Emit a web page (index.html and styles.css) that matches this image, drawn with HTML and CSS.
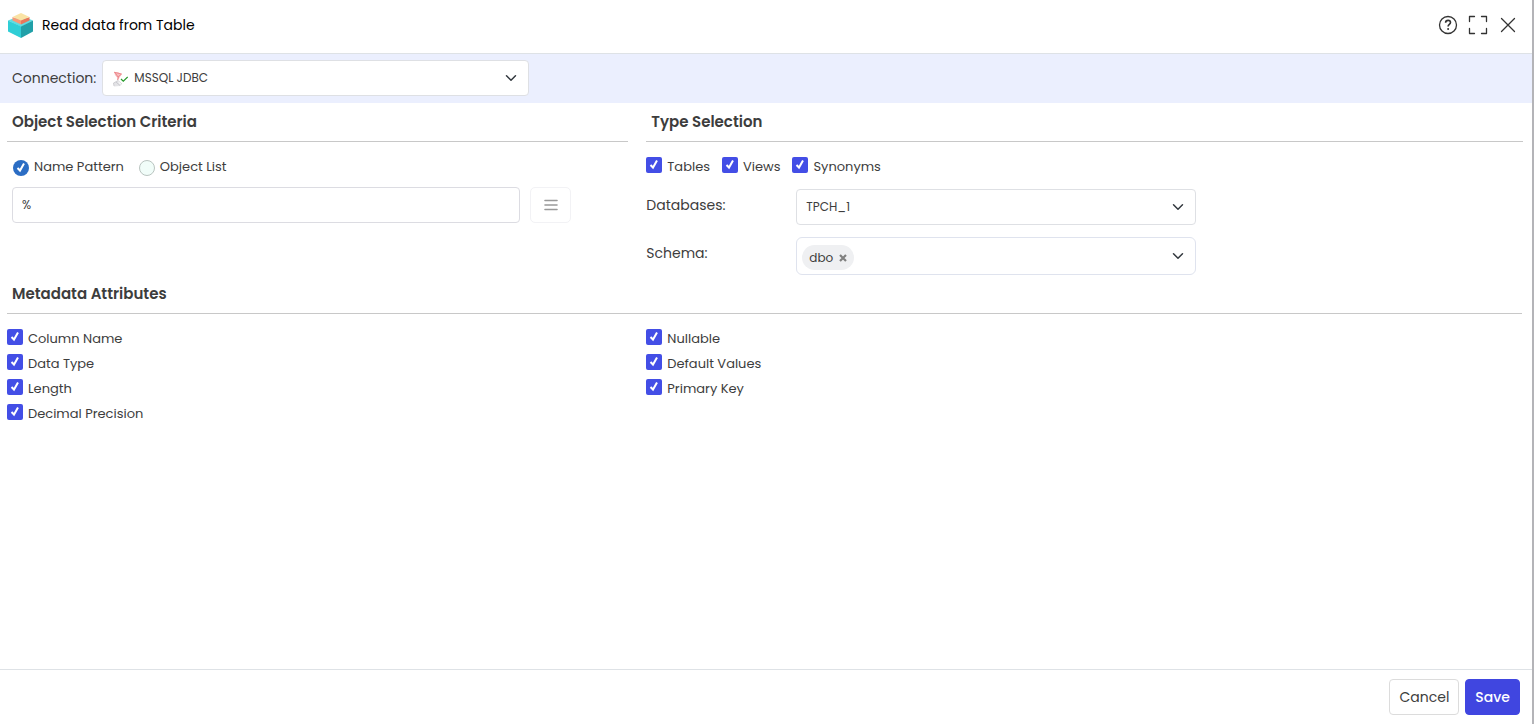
FILE: index.html
```html
<!DOCTYPE html>
<html lang="en">
<head>
    <meta charset="UTF-8">
    <meta name="viewport" content="width=device-width, initial-scale=1.0">
    <title>Read data from Table</title>
    <link rel="stylesheet" href="styles.css">
</head>
<body>
    <form class="dialog">
        <header class="dialog-header">
            <svg class="logo" viewBox="0 0 26 26" width="26" height="26" aria-hidden="true">
                <path fill="#5fdde3" d="M13 3.500 25 8.500 13 15 0 8.500z"/>
                <path fill="#2fced6" d="M0 8.500 13 14.500V26L0 19.500z"/>
                <path fill="#21a0a8" d="M25 8.500 13 14.500V26l12-6.500z"/>
                <path fill="#f59a78" d="M4.500 5 13 8v4.500L4.500 8.500z"/>
                <path fill="#e8775c" d="M21.500 5 13 8v4.500l8.500-4z"/>
                <path fill="#fae3a5" d="M13 1 21.500 5 13 8.500 4.500 5z"/>
            </svg>
            <h1 class="dialog-title">Read data from Table</h1>
            <div class="header-actions">
                <button type="button" class="icon-btn" aria-label="Help">
                    <svg viewBox="0 0 20 20" width="20" height="20" fill="none" stroke="currentColor" stroke-width="1.300">
                        <circle cx="10" cy="10" r="8.500"/>
                        <path stroke-width="1.600" d="M7.600 7.800c0-1.500 1-2.400 2.500-2.400 1.400 0 2.400.9 2.400 2.100 0 1.900-2.400 1.900-2.400 4.100"/>
                        <circle cx="10.100" cy="14" r="1" fill="currentColor" stroke="none"/>
                    </svg>
                </button>
                <button type="button" class="icon-btn" aria-label="Full screen">
                    <svg viewBox="0 0 20 20" width="20" height="20" fill="none" stroke="currentColor" stroke-width="1.300" stroke-linecap="round" stroke-linejoin="round">
                        <path d="M1.500 6.500v-5h5M13.500 1.500h5v5M18.500 13.500v5h-5M6.500 18.500h-5v-5"/>
                    </svg>
                </button>
                <button type="button" class="icon-btn" aria-label="Close">
                    <svg viewBox="0 0 20 20" width="20" height="20" fill="none" stroke="currentColor" stroke-width="1.300" stroke-linecap="round">
                        <path d="M3.500 3.500l13 13M16.500 3.500l-13 13"/>
                    </svg>
                </button>
            </div>
        </header>

        <div class="connection-bar">
            <label for="connection">Connection:</label>
            <div class="select-wrap connection-select">
                <svg class="select-icon" viewBox="0 0 16 16" width="16" height="16" fill="none" aria-hidden="true">
                    <path fill="#f7bcbe" d="M2 1l4 .3L10 3 7.500 6.500 6 9.500 5 6.500 3 4z"/>
                    <path stroke="#ea7d83" stroke-width=".8" d="M2 1.200 9.500 3M3 1.500 6 6l3.500-3M5.500 9l1-3"/>
                    <path fill="#e3e3e6" d="M6 9.500 1.500 12l.5 3.500 6-.5 2-1.500-3-1z"/>
                    <path stroke="#b9b9bd" stroke-width=".6" d="M6 9.500 1.500 12 2 15M4 11l4 3.500M6 9.500 10 13"/>
                    <path stroke="#279a2b" stroke-width="1.200" d="M9 8l2.300 2.200L15.700 6"/>
                </svg>
                <select id="connection" class="select">
                    <option>MSSQL JDBC</option>
                </select>
            </div>
        </div>

        <main class="dialog-body">
            <section class="criteria">
                <h2 class="section-title">Object Selection Criteria</h2>
                <div class="option-row radio-row">
                    <label class="radio"><input type="radio" name="mode" checked>Name Pattern</label>
                    <label class="radio"><input type="radio" name="mode">Object List</label>
                </div>
                <div class="pattern-row">
                    <input type="text" class="pattern-input" value="%" aria-label="Name pattern">
                    <button type="button" class="list-btn" aria-label="Object list" disabled>
                        <svg viewBox="0 0 14 12" width="14" height="12" stroke="currentColor" stroke-width="1.600" stroke-linecap="round">
                            <path d="M1 1.500h12M1 6h12M1 10.500h12"/>
                        </svg>
                    </button>
                </div>
            </section>

            <section class="types">
                <h2 class="section-title">Type Selection</h2>
                <div class="option-row">
                    <label class="check"><input type="checkbox" checked>Tables</label>
                    <label class="check"><input type="checkbox" checked>Views</label>
                    <label class="check"><input type="checkbox" checked>Synonyms</label>
                </div>
                <div class="field">
                    <label for="database">Databases:</label>
                    <div class="select-wrap">
                        <select id="database" class="select">
                            <option>TPCH_1</option>
                        </select>
                    </div>
                </div>
                <div class="field">
                    <label for="schema">Schema:</label>
                    <div class="select-wrap">
                        <select id="schema" class="select select-multi">
                            <option></option>
                        </select>
                        <span class="chip">dbo
                            <button type="button" class="chip-remove" aria-label="Remove dbo">
                                <svg viewBox="0 0 8 8" width="8" height="8" stroke="currentColor" stroke-width="2.200">
                                    <path d="M1 1l6 6M7 1 1 7"/>
                                </svg>
                            </button>
                        </span>
                    </div>
                </div>
            </section>

            <section class="metadata">
                <h2 class="section-title">Metadata Attributes</h2>
                <div class="attributes">
                    <div class="attribute-list">
                        <label class="check"><input type="checkbox" checked>Column Name</label>
                        <label class="check"><input type="checkbox" checked>Data Type</label>
                        <label class="check"><input type="checkbox" checked>Length</label>
                        <label class="check"><input type="checkbox" checked>Decimal Precision</label>
                    </div>
                    <div class="attribute-list">
                        <label class="check"><input type="checkbox" checked>Nullable</label>
                        <label class="check"><input type="checkbox" checked>Default Values</label>
                        <label class="check"><input type="checkbox" checked>Primary Key</label>
                    </div>
                </div>
            </section>
        </main>

        <footer class="dialog-footer">
            <button type="button" class="btn">Cancel</button>
            <button type="submit" class="btn btn-primary">Save</button>
        </footer>
    </form>
</body>
</html>
```
FILE: styles.css
```css
* {
    box-sizing: border-box;
}
body {
    margin: 0;
    font-family: Poppins, Inter, "Open Sans", sans-serif;
    font-size: 14px;
    line-height: 20px;
    color: #3d3d3d;
    background: #fff;
}
button, input, select {
    font: inherit;
    color: inherit;
    margin: 0;
}
.dialog {
    display: flex;
    flex-direction: column;
    min-height: 100vh;
    border-right: 2px solid #b4b4b8;
}

/* header */
.dialog-header {
    display: flex;
    align-items: center;
    gap: 8px;
    height: 54px;
    padding: 0 14px 4px 8px;
    border-bottom: 1px solid #dee2e6;
}
.dialog-title {
    margin: 0;
    font-size: 14px;
    font-weight: 400;
    color: #000;
}
.header-actions {
    display: flex;
    gap: 10px;
    margin-left: auto;
}
.icon-btn {
    display: flex;
    padding: 0;
    border: 0;
    background: none;
    color: #333;
}
.connection-bar {
    display: flex;
    align-items: center;
    gap: 6px;
    height: 49px;
    padding: 0 12px 2px;
    background: #ebeffe;
}

/* selects */
.select-wrap {
    position: relative;
    width: 400px;
}
.connection-select {
    width: 427px;
}
.select {
    display: block;
    width: 100%;
    height: 36px;
    padding: 0 36px 0 9px;
    appearance: none;
    border: 1px solid #dee0e4;
    border-radius: 4px;
    font-size: 12px;
    background: #fff url("data:image/svg+xml,%3Csvg xmlns='http://www.w3.org/2000/svg' viewBox='0 0 16 16'%3E%3Cpath fill='none' stroke='%23343a40' stroke-linecap='round' stroke-linejoin='round' stroke-width='2' d='m2 5 6 6 6-6'/%3E%3C/svg%3E") no-repeat right 11px center / 12px 12px;
}
.connection-select .select {
    padding-left: 31px;
}
.select-icon {
    position: absolute;
    left: 10px;
    top: 11px;
}
.select-multi {
    height: 38px;
    border-color: #dfe3ee;
    border-radius: 6px;
}
.chip {
    position: absolute;
    left: 6px;
    top: 8px;
    display: flex;
    align-items: center;
    gap: 6px;
    height: 25px;
    padding: 0 7px;
    border-radius: 13px;
    font-size: 12px;
    background: #eff0f2;
}
.chip-remove {
    display: flex;
    padding: 0;
    border: 0;
    background: none;
    color: #808080;
}

/* body */
.dialog-body {
    flex: 1;
    display: grid;
    grid-template-columns: 5fr 7fr;
    grid-template-rows: auto 1fr;
}
.criteria, .metadata {
    padding: 0 10px 0 7px;
}
.types {
    padding: 0 9px 0 8px;
}
.metadata {
    grid-column: 1 / -1;
}
.section-title {
    height: 39px;
    margin: 0;
    padding: 9px 5px 0;
    border-bottom: 1px solid #c8c8c8;
    font-size: 15px;
    font-weight: 600;
}
.option-row {
    display: flex;
    gap: 12px;
    padding-top: 15px;
    margin-bottom: 12px;
}
.radio-row {
    gap: 15px;
    padding: 15px 6px 0;
    margin-bottom: 10px;
}
.check, .radio {
    display: flex;
    gap: 5px;
    font-size: 13px;
}
.check input, .radio input {
    flex: none;
    width: 16px;
    height: 16px;
    appearance: none;
}
.check input {
    border-radius: 2px;
}
.radio input {
    margin-top: 3px;
    border: 1px solid #b9c4c0;
    border-radius: 50%;
    background: #f1fdf9;
}
.check input:checked, .radio input:checked {
    border: 0;
    background: #434ee6 url("data:image/svg+xml,%3Csvg xmlns='http://www.w3.org/2000/svg' viewBox='0 0 16 16'%3E%3Cpath fill='none' stroke='white' stroke-width='2' d='M4.500 8 7 10.500l4-7'/%3E%3C/svg%3E") center / 16px 16px;
}
.radio input:checked {
    background-color: #2b6dc4;
}
.pattern-row {
    display: flex;
    gap: 10px;
    padding: 0 57px 0 5px;
}
.pattern-input {
    flex: 1;
    min-width: 0;
    height: 36px;
    padding: 0 9px;
    border: 1px solid #dcdce2;
    border-radius: 4px;
    font-size: 12px;
}
.list-btn {
    display: flex;
    align-items: center;
    justify-content: center;
    width: 41px;
    height: 36px;
    padding: 0;
    border: 1px solid #f2f2f5;
    border-radius: 5px;
    background: #fff;
    color: #999;
}
.field {
    display: grid;
    grid-template-columns: 150px 1fr;
}
.field label {
    padding-top: 6px;
}
.field + .field {
    margin-top: 12px;
}
.attributes {
    display: grid;
    grid-template-columns: 5fr 7fr;
    margin: 0 -10px 0 -7px;
    padding-top: 15px;
}
.attribute-list {
    display: flex;
    flex-direction: column;
    gap: 5px;
    padding-left: 7px;
}
.attribute-list + .attribute-list {
    padding-left: 8px;
}

/* footer */
.dialog-footer {
    display: flex;
    justify-content: flex-end;
    gap: 6px;
    padding: 9px 12px;
    border-top: 1px solid #dee2e6;
}
.btn {
    height: 36px;
    padding: 0 9px;
    border: 1px solid #dcdcdc;
    border-radius: 4px;
    background: #fff;
}
.btn-primary {
    border-color: #4046e0;
    background: #4046e0;
    color: #fff;
    font-weight: 500;
}
```
